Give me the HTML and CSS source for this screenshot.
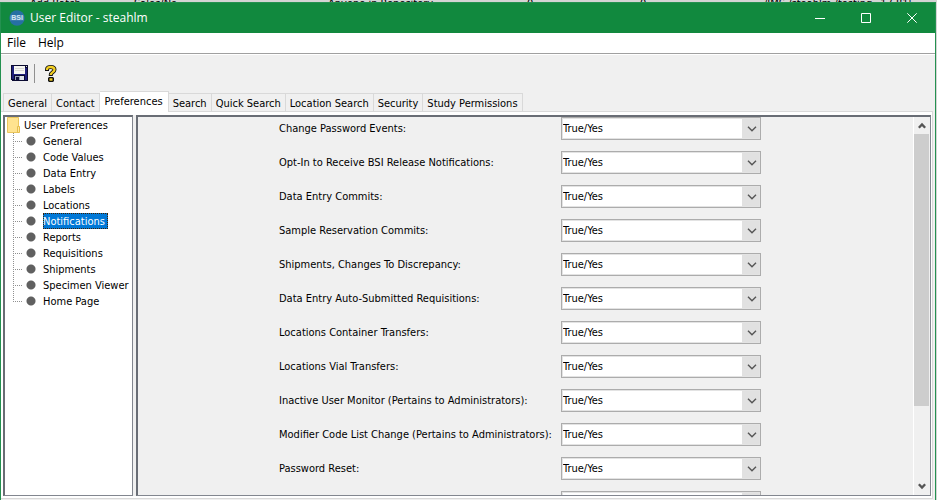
FILE: index.html
```html
<!DOCTYPE html>
<html lang="en">
<head>
<meta charset="utf-8">
<title>User Editor - steahlm</title>
<link rel="stylesheet" href="styles.css">
</head>
<body>
<svg class="defs" aria-hidden="true">
  <symbol id="chevron" viewBox="0 0 10 6"><path d="M1 .8 5 4.800 9 .8" fill="none" stroke="#555" stroke-width="1.4"/></symbol>
  <symbol id="arrow" viewBox="0 0 8 7"><path d="M.8 1.200 4 4.600 7.200 1.200" fill="none" stroke="#555" stroke-width="2.400"/></symbol>
</svg>
<div class="backdrop" aria-hidden="true">
  <span>Add Batch</span><span>Sales/No</span><span>Anyone in Repository</span><span>0</span><span>0</span><span>/IMS /steahlm /testing _17.815</span>
</div>
<div class="window">
  <header class="titlebar">
    <svg class="logo" viewBox="0 0 16 16"><circle cx="8" cy="8" r="7.700" fill="#2670a3"/><path d="M1 8h14" stroke="#8fb5d2" stroke-width="5" opacity=".35"/><text x="8" y="10.300" text-anchor="middle">BSI</text></svg>
    <h1>User Editor - steahlm</h1>
    <div class="controls">
      <button aria-label="Minimize"><svg viewBox="0 0 10 10"><path d="M0 5.500h10"/></svg></button>
      <button aria-label="Maximize"><svg viewBox="0 0 10 10"><path d="M.5.5h9v9h-9z"/></svg></button>
      <button aria-label="Close"><svg viewBox="0 0 10 10"><path d="m.3.300 9.400 9.400M9.700.300.300 9.700"/></svg></button>
    </div>
  </header>
  <nav class="menubar"><button>File</button><button>Help</button></nav>
  <div class="toolbar">
    <button aria-label="Save"><svg width="17" height="16" viewBox="0 0 17 16" shape-rendering="crispEdges"><path d="M0 0h17v16H1l-1-1z" fill="#0a0a30"/><path d="M1 1h2v13H1zM14 3h2v12h-2zM3 8h11v2H3z" fill="#20207c"/><path d="M3 1h11v8H3z" fill="#f6f6f2"/><path d="M4 3h9v1H4zM4 5h9v1H4z" fill="#d8d8d4"/><path d="M15 1h1v1h-1z" fill="#ddd"/><path d="M4 11h9v4H4z" fill="#9aa3b8"/><path d="M5 12h3v3H5z" fill="#10103a"/><path d="M9 11h4v4H9z" fill="#dfe3ea"/></svg></button>
    <span class="separator"></span>
    <button aria-label="Help"><svg width="12" height="17" viewBox="0 0 12 17"><path d="M2 6V4.500C2 2.700 3.600 2 5.700 2s3.800.9 3.800 2.800c0 2.200-3.700 2.400-3.700 5V11" fill="none" stroke="#111" stroke-width="4"/><path d="M2 5V4.500C2 2.700 3.600 2 5.700 2s3.800.9 3.800 2.800c0 2.200-3.700 2.400-3.700 5v.3" fill="none" stroke="#f3cf23" stroke-width="2.300"/><path d="M4 12h4l1 1v3l-1 1H4l-1-1v-3z" fill="#111"/><path d="M4.500 13.300h3v2.400h-3z" fill="#f3cf23"/></svg></button>
  </div>
  <div class="tabs" role="tablist">
    <button role="tab">General</button><button role="tab">Contact</button><button role="tab" class="active" aria-selected="true">Preferences</button><button role="tab">Search</button><button role="tab">Quick Search</button><button role="tab">Location Search</button><button role="tab">Security</button><button role="tab">Study Permissions</button>
  </div>
  <main class="page">
    <nav class="tree">
      <div class="root"><svg width="14" height="16" viewBox="0 0 14 16"><path d="M.5.5h11v15H.5z" fill="#ffe38f" stroke="#eac65c"/><path d="M10.500 9.500h2v6h-2z" fill="#ffe79d" stroke="#e5bd4d"/></svg><a href="#">User Preferences</a></div>
      <ul>
        <li><a href="#">General</a></li>
        <li><a href="#">Code Values</a></li>
        <li><a href="#">Data Entry</a></li>
        <li><a href="#">Labels</a></li>
        <li><a href="#">Locations</a></li>
        <li><a href="#" class="selected">Notifications</a></li>
        <li><a href="#">Reports</a></li>
        <li><a href="#">Requisitions</a></li>
        <li><a href="#">Shipments</a></li>
        <li><a href="#">Specimen Viewer</a></li>
        <li><a href="#">Home Page</a></li>
      </ul>
    </nav>
    <div class="splitter"></div>
    <section class="panel">
      <form class="settings">
        <div class="row"><label for="s1">Change Password Events:</label><span class="combo"><select id="s1"><option>True/Yes</option></select><svg><use href="#chevron"/></svg></span></div>
        <div class="row"><label for="s2">Opt-In to Receive BSI Release Notifications:</label><span class="combo"><select id="s2"><option>True/Yes</option></select><svg><use href="#chevron"/></svg></span></div>
        <div class="row"><label for="s3">Data Entry Commits:</label><span class="combo"><select id="s3"><option>True/Yes</option></select><svg><use href="#chevron"/></svg></span></div>
        <div class="row"><label for="s4">Sample Reservation Commits:</label><span class="combo"><select id="s4"><option>True/Yes</option></select><svg><use href="#chevron"/></svg></span></div>
        <div class="row"><label for="s5">Shipments, Changes To Discrepancy:</label><span class="combo"><select id="s5"><option>True/Yes</option></select><svg><use href="#chevron"/></svg></span></div>
        <div class="row"><label for="s6">Data Entry Auto-Submitted Requisitions:</label><span class="combo"><select id="s6"><option>True/Yes</option></select><svg><use href="#chevron"/></svg></span></div>
        <div class="row"><label for="s7">Locations Container Transfers:</label><span class="combo"><select id="s7"><option>True/Yes</option></select><svg><use href="#chevron"/></svg></span></div>
        <div class="row"><label for="s8">Locations Vial Transfers:</label><span class="combo"><select id="s8"><option>True/Yes</option></select><svg><use href="#chevron"/></svg></span></div>
        <div class="row"><label for="s9">Inactive User Monitor (Pertains to Administrators):</label><span class="combo"><select id="s9"><option>True/Yes</option></select><svg><use href="#chevron"/></svg></span></div>
        <div class="row"><label for="s10">Modifier Code List Change (Pertains to Administrators):</label><span class="combo"><select id="s10"><option>True/Yes</option></select><svg><use href="#chevron"/></svg></span></div>
        <div class="row"><label for="s11">Password Reset:</label><span class="combo"><select id="s11"><option>True/Yes</option></select><svg><use href="#chevron"/></svg></span></div>
        <div class="row"><span></span><span class="combo"><select aria-label="Next setting"><option></option></select></span></div>
      </form>
      <div class="scrollbar">
        <button class="up" aria-label="Scroll up"><svg><use href="#arrow"/></svg></button>
        <div class="track"><div class="thumb"></div></div>
        <button aria-label="Scroll down"><svg><use href="#arrow"/></svg></button>
      </div>
    </section>
  </main>
</div>
</body>
</html>
```
FILE: styles.css
```css
* { box-sizing: border-box; }
body {
  margin: 0;
  height: 100vh;
  display: flex;
  flex-direction: column;
  overflow: hidden;
  background: #d4d4d4;
  color: #000;
  font: 11px/16px "DejaVu Sans Condensed", "Noto Sans", sans-serif;
}
button { font: inherit; color: inherit; border: 0; padding: 0; background: none; }
a { color: inherit; text-decoration: none; }
svg { display: block; }
.defs { position: absolute; width: 0; height: 0; }

.backdrop {
  flex: none;
  height: 2px;
  overflow: hidden;
  display: grid;
  grid-template-columns: 104px 194px 199px 113px 124px 1fr;
  align-items: end;
  padding-left: 30px;
  line-height: 8px;
  white-space: nowrap;
}
.window {
  flex: 1;
  min-height: 0;
  display: flex;
  flex-direction: column;
  margin-right: 1px;
  border: solid #249150;
  border-width: 1px 1px 0;
  background: #f0f0f0;
}
.titlebar {
  flex: none;
  display: flex;
  align-items: center;
  height: 30px;
  padding-left: 8px;
  background: #11893e;
  color: #fff;
}
.logo { width: 16px; height: 16px; }
.logo text { font: bold 7px "Liberation Sans", sans-serif; fill: #d3e6f2; }
h1 { margin: 0 0 0 5px; font: 12px/16px "Open Sans", sans-serif; }
.controls { display: flex; margin-left: auto; }
.controls button { display: grid; place-items: center; width: 46px; height: 30px; }
.controls svg { width: 10px; height: 10px; fill: none; stroke: #fff; }

.menubar {
  flex: none;
  display: flex;
  gap: 12px;
  height: 21px;
  padding-left: 6px;
  background: #fff;
  border-bottom: 1px solid #a0a0a0;
  font: 12px/20px "Open Sans", sans-serif;
}
.toolbar {
  flex: none;
  display: flex;
  align-items: center;
  height: 37px;
  padding-left: 10px;
  border-top: 1px solid #fff;
}
.separator { width: 1px; height: 19px; margin: 0 10px 0 6px; background: #909090; }

.tabs {
  flex: none;
  display: flex;
  align-items: flex-end;
  height: 20px;
  padding-left: 2px;
  position: relative;
}
.tabs button {
  height: 18px;
  padding: 2px 4px 0;
  border: 1px solid #d9d9d9;
  border-width: 1px 1px 0 0;
  line-height: 15px;
  white-space: nowrap;
}
.tabs button:first-child { border-left-width: 1px; }
.tabs .active {
  height: 21px;
  margin-bottom: -1px;
  padding: 0 5px 2px;
  background: #fff;
}

.page {
  flex: 1;
  min-height: 0;
  display: flex;
  margin: 0 2px 1px 0;
  padding: 3px 1px 2px 2px;
  background: #fff;
  border: solid #d9d9d9;
  border-width: 1px 1px 1px 0;
}
.tree, .panel {
  border: solid #82868f;
  border-width: 2px 1px 1px 2px;
  border-top-color: #696d75;
  border-left-color: #696d75;
}
.tree { flex: none; width: 130px; background: #fff; overflow: hidden; white-space: nowrap; }
.splitter { flex: none; width: 3px; background: #f0f0f0; }
.root { display: flex; gap: 3px; height: 16px; padding-left: 2px; line-height: 18px; }
.tree ul { list-style: none; margin: 0; padding: 0 0 0 8px; }
.tree li {
  display: flex;
  height: 16px;
  padding-left: 30px;
  line-height: 18px;
  background:
    radial-gradient(circle at 18px 8px, #606060 4px, transparent 5px),
    repeating-linear-gradient(90deg, #909090 0 1px, transparent 1px 2px) 0 8px / 9px 1px no-repeat,
    repeating-linear-gradient(#909090 0 1px, transparent 1px 2px) 0 0 / 1px 16px no-repeat;
}
.tree li:last-child { background-size: auto, 9px 1px, 1px 8px; }
.tree .selected {
  padding-right: 3px;
  background: #0078d7;
  color: #fff;
  outline: 1px dotted #402000;
  outline-offset: -1px;
}

.panel { flex: 1; min-width: 0; display: flex; background: #f0f0f0; }
.settings {
  flex: 1;
  min-width: 0;
  display: flex;
  flex-direction: column;
  align-items: center;
  gap: 11px;
  padding-right: 11px;
  overflow: hidden;
}
.row {
  flex: none;
  display: grid;
  grid-template-columns: 282px 200px;
  align-items: center;
  white-space: nowrap;
}
.combo { position: relative; }
.combo select {
  display: block;
  appearance: none;
  width: 100%;
  height: 23px;
  padding: 0 20px 0 1px;
  border: 1px solid #acacac;
  border-radius: 0;
  outline: 0;
  color: #000;
  font: inherit;
  background: linear-gradient(90deg, transparent calc(100% - 18px), #e1e1e1 0), #fff;
  box-shadow: inset 0 0 0 1px #e3e3e3;
}
.combo svg { position: absolute; right: 4px; top: 9px; width: 10px; height: 6px; pointer-events: none; }

.scrollbar {
  flex: none;
  display: flex;
  flex-direction: column;
  width: 17px;
  padding-right: 1px;
  border-left: 1px solid #fff;
}
.scrollbar button { display: grid; place-items: center; height: 17px; }
.scrollbar svg { width: 8px; height: 7px; }
.scrollbar .up svg { transform: rotate(180deg); }
.track { flex: 1; }
.thumb { height: 79%; background: #cdcdcd; }
```
